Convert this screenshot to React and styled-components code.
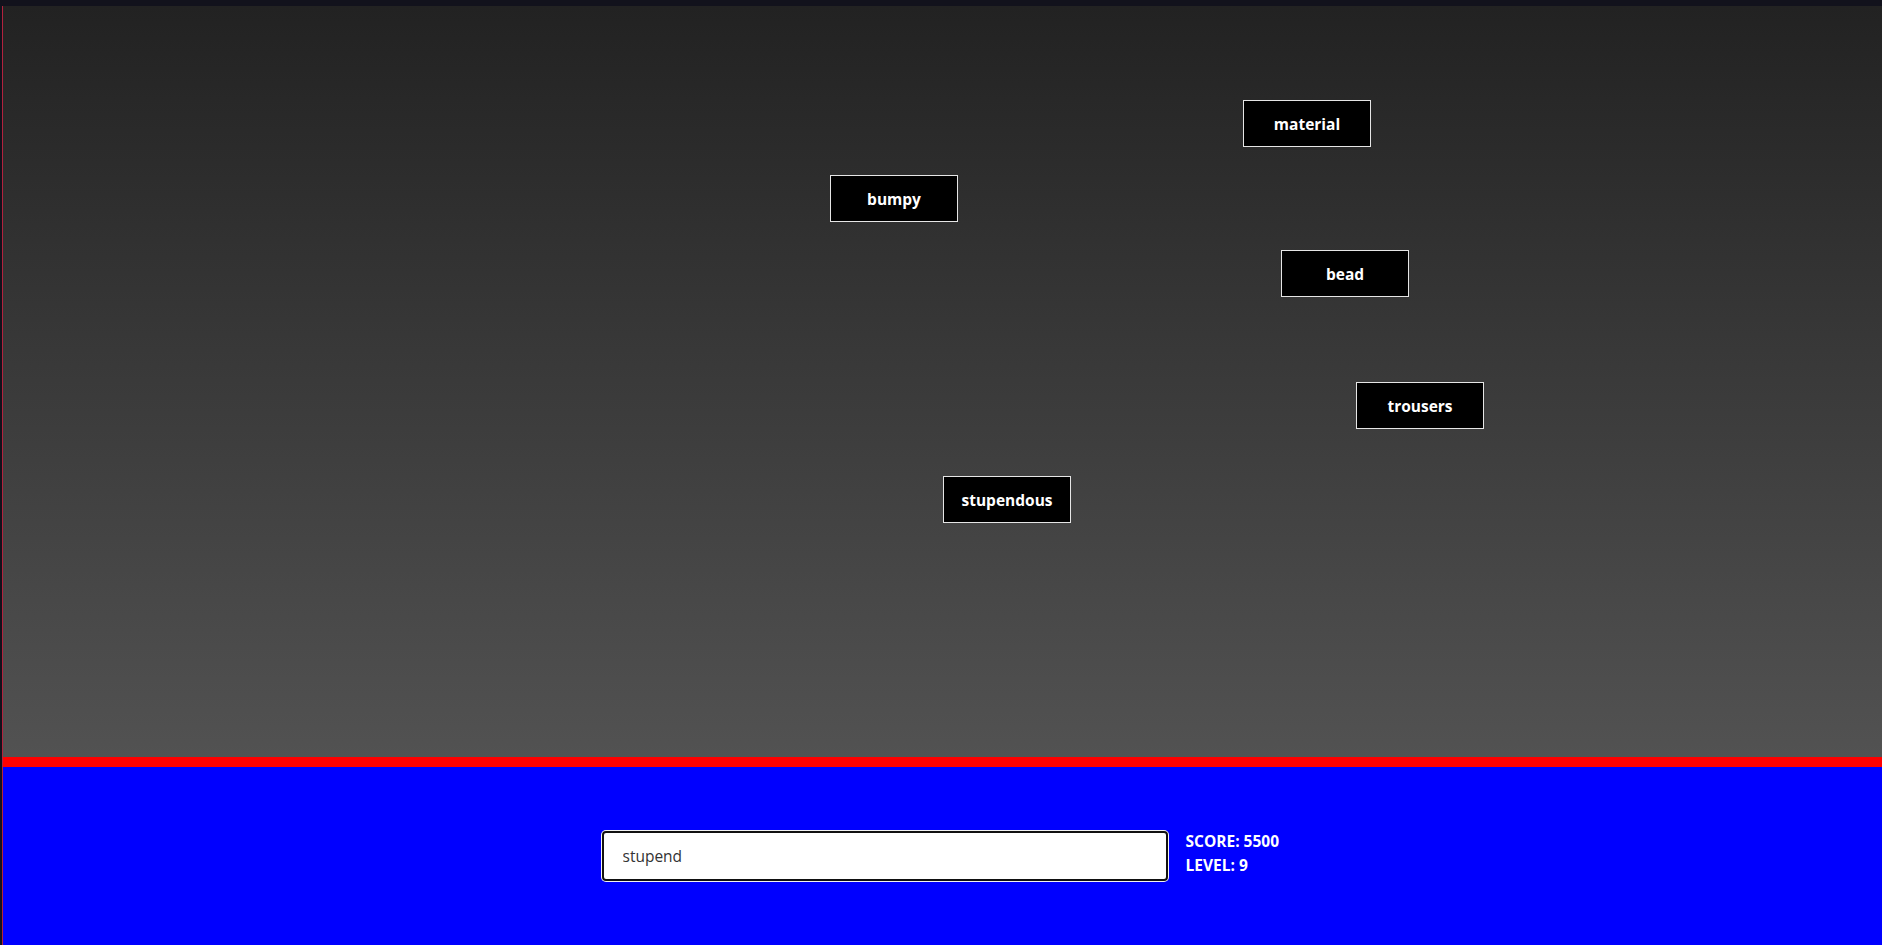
import React, { useState } from "react";
import styled, { createGlobalStyle } from "styled-components";

const GlobalStyle = createGlobalStyle`
  html, body {
    margin: 0;
    padding: 0;
    background: #12121c;
    font-family: "Open Sans", "Liberation Sans", sans-serif;
  }
`;

// falling words, positions on the play field
const words = [
  { text: "material", x: 1240, y: 94 },
  { text: "bumpy", x: 827, y: 169 },
  { text: "bead", x: 1278, y: 244 },
  { text: "trousers", x: 1353, y: 376 },
  { text: "stupendous", x: 940, y: 470 },
];

const App = () => {
  const [typed, setTyped] = useState("stupend");

  return (
    <>
      <GlobalStyle />
      <Page>
        <Game>
          <Field>
            {words.map((w) => (
              <Word key={w.text} style={{ left: w.x, top: w.y }}>
                {w.text}
              </Word>
            ))}
          </Field>
          <DangerLine />
          <Controls>
            <Input
              type="text"
              value={typed}
              onChange={(e) => setTyped(e.target.value)}
            />
            <Stats>
              <span>SCORE: 5500</span>
              <span>LEVEL: 9</span>
            </Stats>
          </Controls>
        </Game>
      </Page>
    </>
  );
};

const Page = styled.div`
  height: 945px;
  padding: 6px 0 0 2px;
  box-sizing: border-box;
  display: flex;
`;

const Game = styled.div`
  flex: 1;
  display: flex;
  flex-direction: column;
  border-left: 1px solid #b3223d;
`;

const Field = styled.div`
  position: relative;
  height: 751px;
  background: linear-gradient(to bottom, #222222, #525252);
`;

const Word = styled.div`
  position: absolute;
  width: 128px;
  height: 47px;
  box-sizing: border-box;
  display: flex;
  align-items: center;
  justify-content: center;
  background: #000;
  border: 1px solid #e6e6e6;
  color: #fff;
  font-weight: 700;
  font-size: 15.5px;
`;

const DangerLine = styled.div`
  height: 10px;
  background: #ff0000;
`;

const Controls = styled.div`
  flex: 1;
  background: #0000ff;
  display: flex;
  align-items: center;
  justify-content: center;
  gap: 18px;
  padding-right: 2px;
`;

const Input = styled.input`
  width: 566px;
  height: 50px;
  box-sizing: border-box;
  padding: 0 19px;
  border: 2px solid #111;
  border-radius: 4px;
  background: #fff;
  color: #333;
  font-family: "Open Sans", "Liberation Sans", sans-serif;
  font-size: 15.5px;
  box-shadow: 0 0 0 1px #f2f2f2;
  outline: none;
`;

const Stats = styled.div`
  display: flex;
  flex-direction: column;
  width: 96px;
  margin-bottom: 6px;
  color: #fff;
  font-weight: 700;
  font-size: 15.5px;
  line-height: 24px;
  white-space: nowrap;
`;

export default App;
